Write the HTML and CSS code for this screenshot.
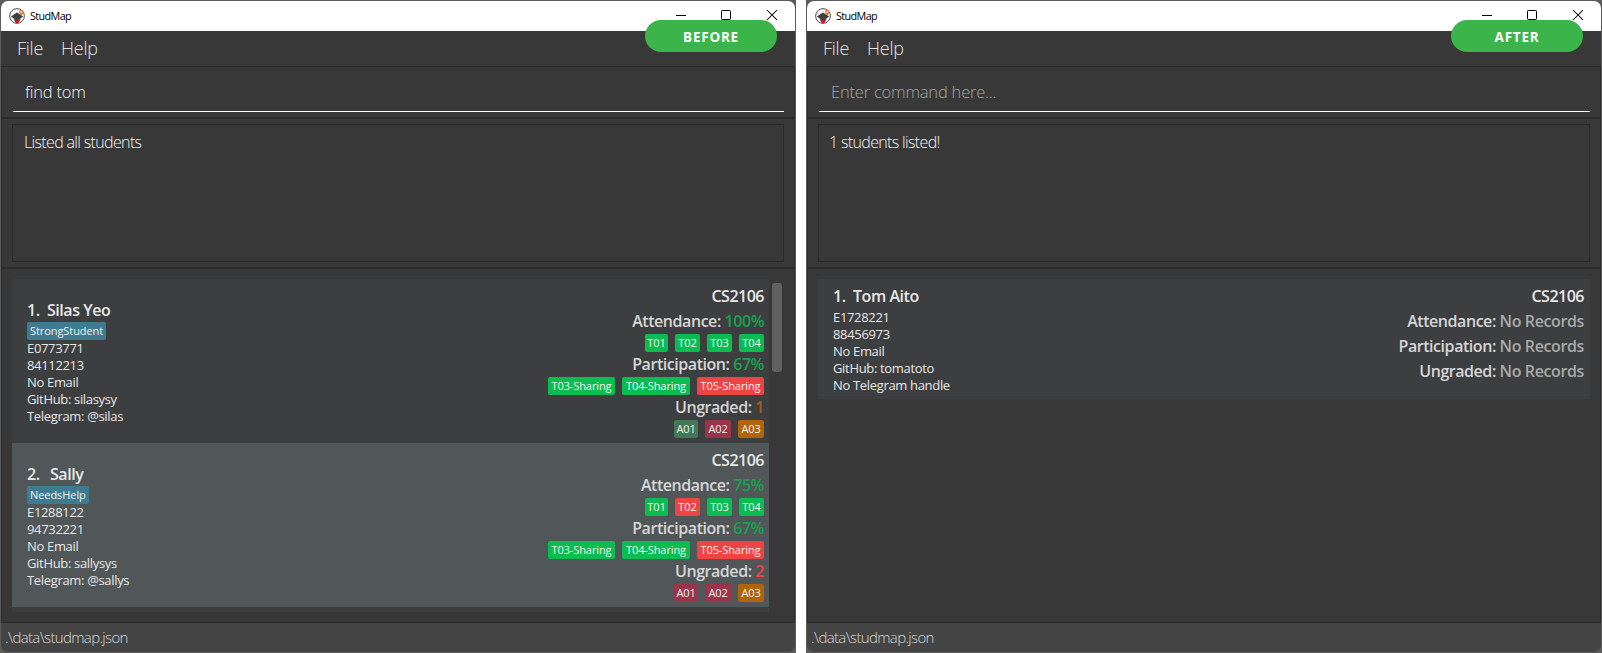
FILE: index.html
```
<!DOCTYPE html>
<html lang="en">
<head>
<meta charset="utf-8">
<title>StudMap</title>
<link rel="stylesheet" href="styles.css">
</head>
<body>
<svg width="0" height="0" class="defs">
  <symbol id="logo" viewBox="0 0 16 16">
    <circle cx="8" cy="8" r="7.4" fill="#f4f2f1" stroke="#555" stroke-width="1"/>
    <path d="M4.600 10.500h7.200l-1.600 3.300q-2.200 1-4.200 0z" fill="#555"/>
    <path d="M5.600 12h5l-1.100 2.700q-1.400.4-2.800 0z" fill="#d41822"/>
    <path d="M1.900 8.500 8 4.600l6.200 3.900L8 12.600z" fill="#3d3f42"/>
    <path d="M12.300 7.600c-1.300-1.500-2.200-2.500-2.200-3.700a2.200 2.200 0 0 1 4.400 0c0 1.200-.9 2.200-2.200 3.700z" fill="#e8793c"/>
    <circle cx="12.300" cy="3.900" r=".9" fill="#fbe3d3"/>
  </symbol>
  <symbol id="controls" viewBox="0 0 102 12">
    <path d="M1 6.500h10" stroke="#000"/>
    <rect x="46.500" y="1.500" width="9" height="9" rx=".8" fill="none" stroke="#000"/>
    <path d="M92 1l10 10M102 1L92 11" stroke="#000" stroke-width="1.050"/>
  </symbol>
</svg>
<main class="compare">
  <section class="window">
    <header class="titlebar">
      <svg class="logo"><use href="#logo"/></svg>
      <span class="title">StudMap</span>
      <svg class="controls"><use href="#controls"/></svg>
    </header>
    <nav class="menu"><span class="file">File</span><span class="help">Help</span></nav>
    <div class="command"><div class="field typed">find tom</div></div>
    <div class="result"><div class="result-box all">Listed all students</div></div>
    <div class="list-area">
      <div class="list tall">
        <article class="card">
          <div class="info">
            <h2><span class="index">1.</span>Silas Yeo</h2>
            <span class="tag blue">StrongStudent</span>
            <p>E0773771</p><p>84112213</p><p>No Email</p><p>GitHub: silasysy</p><p>Telegram: @silas</p>
          </div>
          <div class="records">
            <div class="module">CS2106</div>
            <div class="stat">Attendance: <span class="good">100%</span></div>
            <div class="tags"><span class="tag green w23">T01</span><span class="tag green w25">T02</span><span class="tag green w25">T03</span><span class="tag green w25">T04</span></div>
            <div class="stat">Participation: <span class="good">67%</span></div>
            <div class="tags"><span class="tag green w67">T03-Sharing</span><span class="tag green w68">T04-Sharing</span><span class="tag red w67">T05-Sharing</span></div>
            <div class="stat">Ungraded: <span class="warn">1</span></div>
            <div class="tags"><span class="tag moss w24">A01</span><span class="tag wine w26">A02</span><span class="tag amber w26">A03</span></div>
          </div>
        </article>
        <article class="card selected">
          <div class="info">
            <h2><span class="index wide">2.</span>Sally</h2>
            <span class="tag blue">NeedsHelp</span>
            <p>E1288122</p><p>94732221</p><p>No Email</p><p>GitHub: sallysys</p><p>Telegram: @sallys</p>
          </div>
          <div class="records">
            <div class="module">CS2106</div>
            <div class="stat">Attendance: <span class="good">75%</span></div>
            <div class="tags"><span class="tag green w23">T01</span><span class="tag red w25">T02</span><span class="tag green w25">T03</span><span class="tag green w25">T04</span></div>
            <div class="stat">Participation: <span class="good">67%</span></div>
            <div class="tags"><span class="tag green w67">T03-Sharing</span><span class="tag green w68">T04-Sharing</span><span class="tag red w67">T05-Sharing</span></div>
            <div class="stat">Ungraded: <span class="bad">2</span></div>
            <div class="tags"><span class="tag wine w24">A01</span><span class="tag wine w26">A02</span><span class="tag amber w26">A03</span></div>
          </div>
        </article>
      </div>
      <div class="scrollbar"><div class="thumb"></div></div>
    </div>
    <footer class="status">.\data\studmap.json</footer>
    <div class="badge">BEFORE</div>
  </section>
  <section class="window">
    <header class="titlebar">
      <svg class="logo"><use href="#logo"/></svg>
      <span class="title">StudMap</span>
      <svg class="controls"><use href="#controls"/></svg>
    </header>
    <nav class="menu"><span class="file">File</span><span class="help">Help</span></nav>
    <div class="command"><div class="field prompt">Enter command here...</div></div>
    <div class="result"><div class="result-box one">1 students listed!</div></div>
    <div class="list-area">
      <div class="list">
        <article class="card short">
          <div class="info">
            <h2><span class="index">1.</span>Tom Aito</h2>
            <p>E1728221</p><p>88456973</p><p>No Email</p><p>GitHub: tomatoto</p><p>No Telegram handle</p>
          </div>
          <div class="records">
            <div class="module">CS2106</div>
            <div class="stat">Attendance: <span class="none">No Records</span></div>
            <div class="stat">Participation: <span class="none">No Records</span></div>
            <div class="stat">Ungraded: <span class="none">No Records</span></div>
          </div>
        </article>
      </div>
    </div>
    <footer class="status">.\data\studmap.json</footer>
    <div class="badge">AFTER</div>
  </section>
</main>
</body>
</html>
```
FILE: styles.css
```
* { box-sizing: border-box; }
body { margin: 0; background: #fff; font-family: "Open Sans", "Noto Sans", sans-serif; overflow: hidden; }
.defs { position: absolute; }
.compare { display: flex; gap: 10px; width: 1602px; height: 653px; }
.window {
  position: relative; flex: 1; display: flex; flex-direction: column; height: 653px;
  border: 1px solid #5c5c5c; background: #5c5c5c; white-space: nowrap;
}
.titlebar {
  flex: 0 0 30px; display: flex; align-items: center; padding: 0 18px 0 8px;
  border-radius: 7px 7px 0 0; background: #fff; color: #000;
}
.logo { width: 16px; height: 16px; margin-right: 5px; margin-top: -1px; }
.title { flex: 1; font-size: 10.8px; letter-spacing: -0.6px; line-height: 16px; }
.controls { width: 102px; height: 12px; margin-top: -2px; }
.menu, .command, .result, .list-area { background: #383838; }
.menu {
  flex: 0 0 36px; display: flex; gap: 18px; padding-left: 16px; border-bottom: 1px solid #2a2a2a;
  font-size: 18px; font-weight: 300; line-height: 34px; letter-spacing: -0.25px; color: #e4e4e4;
}
.command { flex: 0 0 52px; padding: 10px 10px 0 11px; border: solid #2a2a2a; border-width: 0 1px 2px; }
.field {
  height: 35px; padding-left: 12px; border-bottom: 1px solid #fff;
  font-size: 16.5px; font-weight: 300; line-height: 30px; letter-spacing: -0.2px; color: #f4f4f4;
}
.prompt { color: #a6a6a6; }
.result { flex: 0 0 150px; padding: 5px 10px; border: solid #2a2a2a; border-width: 0 1px 2px; }
.result-box {
  height: 138px; border: 1px solid #2a2a2a; padding: 3px 11px;
  font-size: 16px; font-weight: 300; line-height: 29px; letter-spacing: -0.65px; color: #f4f4f4;
}
.one { padding-left: 10px; }
.list-area { flex: 1; display: flex; align-items: flex-start; padding: 10px 10px 0 10px; border: solid #2a2a2a; border-width: 0 1px 1px; }
.list { flex: 1; background: #3c3e3f; }
.tall { height: 333px; }
.card { display: flex; justify-content: space-between; height: 164px; padding: 0 5px 0 15px; background: #3c3e3f; color: #e8e8e8; }
.selected { background: #515658; }
.short { height: 120px; padding-right: 6px; }
.info { padding-top: 20px; }
.short .info { padding-top: 6px; }
h2 { margin: 0 0 1px; font-size: 16px; font-weight: 600; line-height: 22px; letter-spacing: -0.45px; }
.short h2 { margin-bottom: 2px; }
.index { display: inline-block; width: 20px; }
.wide { width: 23px; }
p { margin: 0; font-size: 13px; line-height: 17px; letter-spacing: -0.33px; }
.tag {
  display: block; width: max-content; height: 18px; padding: 0 3px; border-radius: 2px;
  font-size: 11px; line-height: 18px; letter-spacing: -0.07px; text-align: center; color: #f2f2f2;
}
.tags { display: flex; justify-content: flex-end; gap: 7px; }
.tags .tag { padding: 0; letter-spacing: -0.1px; }
.blue { background: #3e7b91; }
.green { background: #0bbd51; }
.red { background: #ef4444; }
.moss { background: #437857; }
.wine { background: #9b344b; }
.amber { background: #b1640a; }
.w23 { width: 23px; }
.w24 { width: 24px; }
.w25 { width: 25px; }
.w26 { width: 26px; }
.w67 { width: 67px; }
.w68 { width: 68px; }
.records { padding-top: 5px; text-align: right; }
.module, .stat { height: 25px; font-size: 16px; font-weight: 600; line-height: 25px; letter-spacing: -0.5px; }
.stat { color: #d6d6d6; letter-spacing: -0.45px; }
.good { color: #18a250; }
.warn { color: #a3611b; }
.bad { color: #ef4444; }
.none { color: #a9aaaa; letter-spacing: -0.38px; }
.scrollbar { width: 15px; padding: 4px 2px 0 3px; }
.thumb { height: 89px; border-radius: 3px; background: #606060; }
.status {
  flex: 0 0 29px; padding-left: 4px; border-radius: 0 0 7px 7px; background: #444; color: #d8d8d8;
  font-size: 15px; font-weight: 300; line-height: 28px; letter-spacing: -0.65px;
}
.badge {
  position: absolute; top: 19px; right: 18px; width: 132px; height: 32px; border-radius: 16px; background: #3bb54a;
  color: #fff; font: 700 13.5px/35px "Open Sans", sans-serif; letter-spacing: 0.75px; text-align: center;
}
```
